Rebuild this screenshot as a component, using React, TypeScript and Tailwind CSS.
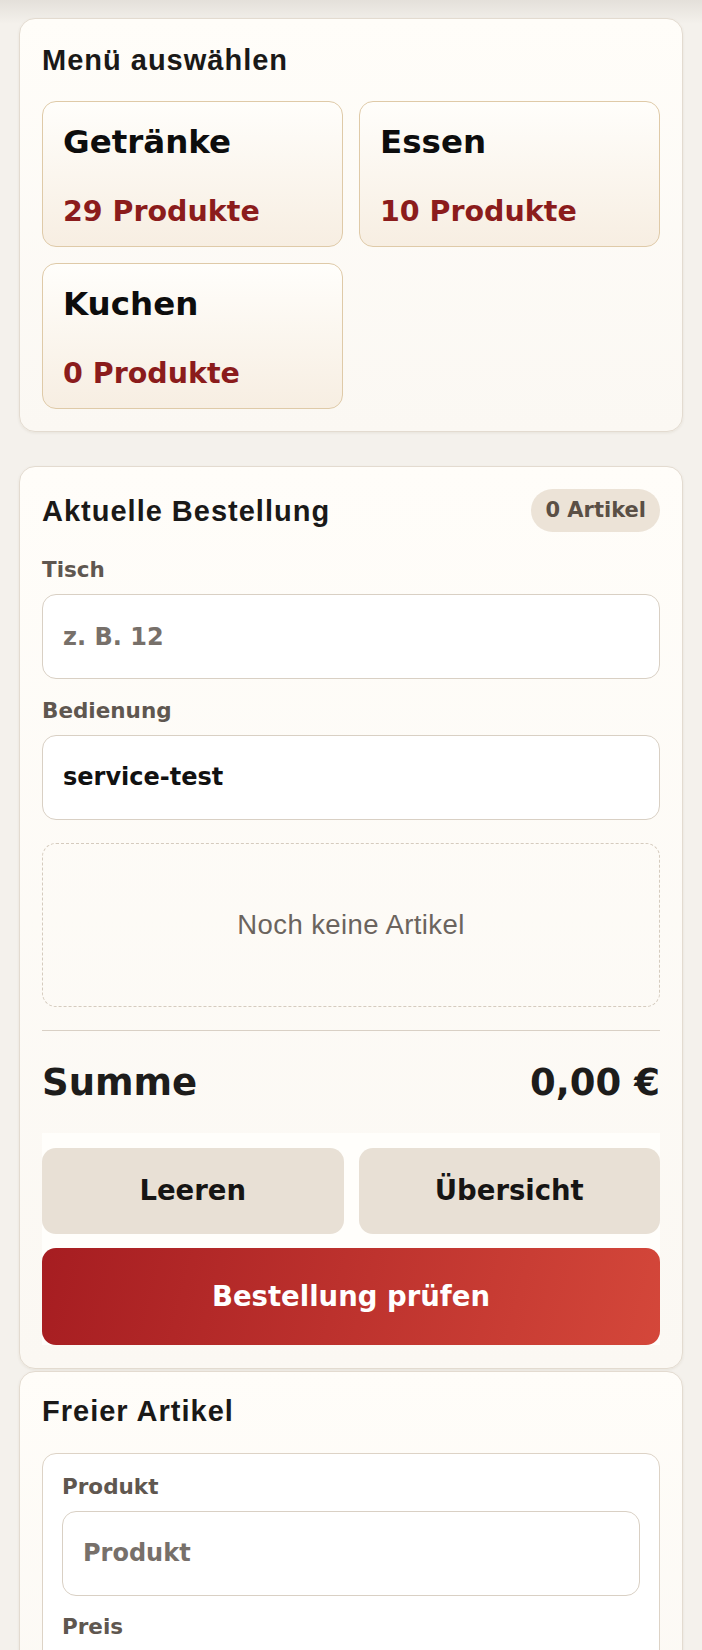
import { useState } from 'react'

const menus = [
  { id: 'drinks', name: 'Getränke', count: 29 },
  { id: 'food', name: 'Essen', count: 10 },
  { id: 'cake', name: 'Kuchen', count: 0 },
]

function Field({
  label,
  value,
  placeholder,
  onChange,
  className = '',
}: {
  label: string
  value: string
  placeholder: string
  onChange: (v: string) => void
  className?: string
}) {
  return (
    <label className={`block ${className}`}>
      <span className="block text-[21.5px] leading-[25px] font-bold text-[#5f5750] mb-[12px]">{label}</span>
      <input
        value={value}
        placeholder={placeholder}
        onChange={(e) => onChange(e.target.value)}
        className="block w-full h-[85px] px-[20px] rounded-[14px] border border-[#d9d0c4] bg-white text-[24px] font-bold text-[#111] placeholder:text-[#77706a] outline-none font-['DejaVu_Sans',sans-serif]"
      />
    </label>
  )
}

function Heading({ children }: { children: React.ReactNode }) {
  return (
    <h2 className="text-[29px] leading-[34px] font-bold tracking-[1px] text-[#1a1918] font-['Liberation_Sans',Arial,sans-serif]">
      {children}
    </h2>
  )
}

export default function App() {
  const [table, setTable] = useState('')
  const [waiter, setWaiter] = useState('service-test')
  const [product, setProduct] = useState('')
  const [price, setPrice] = useState('')
  const items: { name: string; price: number }[] = []
  const total = items.reduce((s, i) => s + i.price, 0)

  const panel =
    'rounded-[16px] border border-[#e3dbd0] bg-[linear-gradient(180deg,#fffdf9,#fbf8f3)] shadow-[0_1px_3px_rgba(80,60,30,0.08)] px-[22px]'

  return (
    <div className="min-h-[1650px] bg-[linear-gradient(180deg,#e4e0da_0px,#f4f1ec_24px)] px-[19px] pt-[18px] pb-[40px] font-['DejaVu_Sans',sans-serif]">
      {/* Menü */}
      <section className={`${panel} pt-[24px] pb-[22px]`}>
        <Heading>Menü auswählen</Heading>
        <div className="grid grid-cols-2 gap-[16px] mt-[24px]">
          {menus.map((m) => (
            <button
              key={m.id}
              className="h-[146px] flex flex-col justify-between text-left pt-[21px] pb-[18px] px-[20px] rounded-[14px] border border-[#dfcaa8] bg-[linear-gradient(180deg,#fffefb,#f7eee2)]"
            >
              <span className="block text-[32.5px] leading-[38px] font-bold text-[#0d0d0d]">{m.name}</span>
              <span className="block text-[28.5px] leading-[33px] font-bold text-[#8b1c1c]">{m.count} Produkte</span>
            </button>
          ))}
        </div>
      </section>

      {/* Bestellung */}
      <section className={`${panel} mt-[34px] pt-[22px] pb-[23px]`}>
        <div className="flex items-center justify-between h-[43px]">
          <Heading>Aktuelle Bestellung</Heading>
          <span className="h-[43px] flex items-center px-[14px] rounded-full bg-[#ece3d7] text-[21px] font-bold text-[#5a4f45]">
            {items.length} Artikel
          </span>
        </div>

        <Field className="mt-[25px]" label="Tisch" value={table} placeholder="z. B. 12" onChange={setTable} />
        <Field className="mt-[18.5px]" label="Bedienung" value={waiter} placeholder="Name" onChange={setWaiter} />

        <div className="mt-[23.5px] h-[164px] flex items-center justify-center rounded-[14px] border border-dashed border-[#d5cbbe] text-[27.5px] tracking-[0.4px] text-[#6b645e] font-['Liberation_Sans',Arial,sans-serif]">
          Noch keine Artikel
        </div>

        <div className="mt-[23px] border-t border-[#d9d0c5] pt-[30px] flex items-center justify-between">
          <span className="text-[37px] leading-[43px] font-bold text-[#1d1c1b]">Summe</span>
          <span className="text-[37px] leading-[43px] font-bold text-[#1d1c1b]">
            {total.toFixed(2).replace('.', ',')} €
          </span>
        </div>

        <div className="mt-[29px] bg-[#fffefb] pt-[15px]">
          <div className="grid grid-cols-2 gap-[15px]">
            <button className="h-[86px] rounded-[14px] bg-[#e8e0d5] text-[27.5px] font-bold text-[#161514]">Leeren</button>
            <button className="h-[86px] rounded-[14px] bg-[#e8e0d5] text-[27.5px] font-bold text-[#161514]">Übersicht</button>
          </div>
          <button className="mt-[14px] w-full h-[97px] rounded-[14px] bg-[linear-gradient(105deg,#a61d21,#d4473a)] text-[27.5px] font-bold text-white">
            Bestellung prüfen
          </button>
        </div>
      </section>

      {/* Freier Artikel */}
      <section className={`${panel} mt-[2px] pt-[22px] pb-[22px]`}>
        <Heading>Freier Artikel</Heading>
        <div className="mt-[24.5px] rounded-[14px] border border-[#ddd3c6] bg-white px-[19px] pt-[20px] pb-[20px]">
          <Field label="Produkt" value={product} placeholder="Produkt" onChange={setProduct} />
          <Field className="mt-[18px]" label="Preis" value={price} placeholder="0,00" onChange={setPrice} />
        </div>
      </section>
    </div>
  )
}
